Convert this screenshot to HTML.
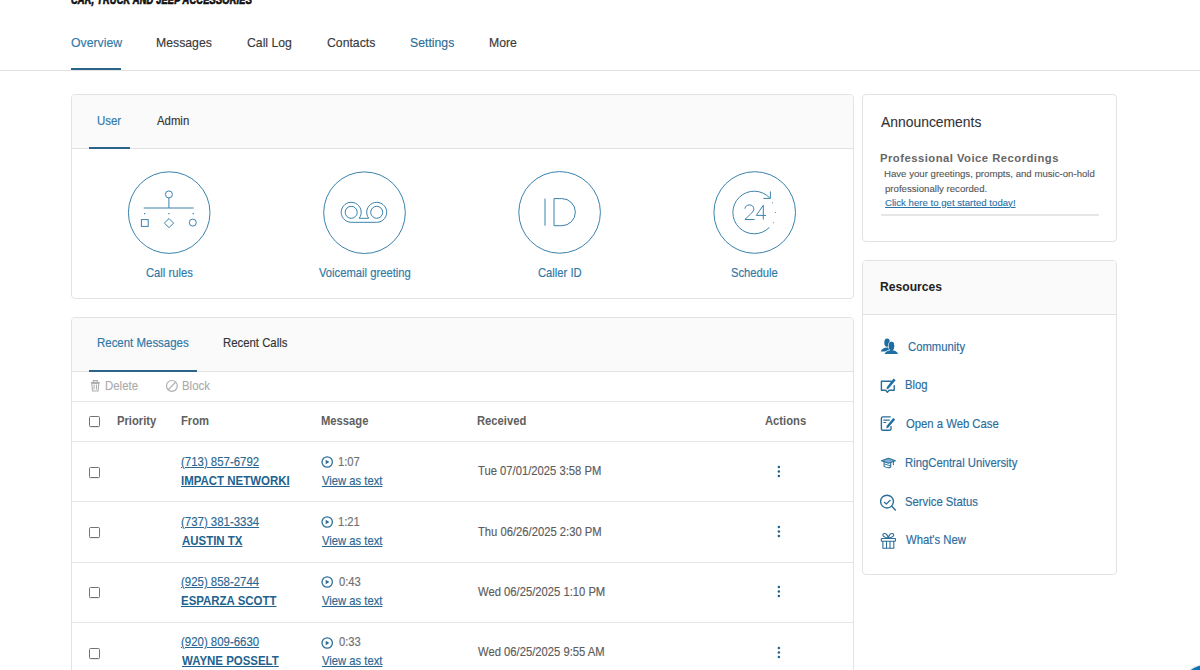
<!DOCTYPE html>
<html><head><meta charset="utf-8">
<style>
html,body{margin:0;padding:0;background:#fff;}
body{width:1200px;height:670px;overflow:hidden;position:relative;font-family:"Liberation Sans",sans-serif;color:#333;}
.a{position:absolute;white-space:nowrap;line-height:1;transform-origin:0 0;}
.card{position:absolute;border:1px solid #e3e3e3;border-radius:4px;background:#fff;box-sizing:border-box;}
.hdr{position:absolute;left:0;right:0;top:0;background:#fafafa;border-bottom:1px solid #e3e3e3;border-radius:3px 3px 0 0;box-sizing:border-box;}
.bar{position:absolute;height:2px;background:#2a6589;}
.hline{position:absolute;height:1px;background:#e6e6e6;}
.cb{position:absolute;width:9px;height:9px;border:1px solid #737373;border-radius:1.5px;background:#fff;box-shadow:0 0.6px 0.6px rgba(0,0,0,0.15);}
svg{position:absolute;overflow:visible;}
</style></head><body>

<!-- logo (cut off) -->
<div class="a" style="left:71px;top:-6.2px;font-size:12px;font-weight:700;font-style:italic;color:#111;transform:scaleX(0.775);letter-spacing:0.2px;-webkit-text-stroke:0.7px #111;">CAR, TRUCK AND JEEP ACCESSORIES</div>

<!-- header -->
<div class="hline" style="left:0;top:70px;width:1200px;background:#e3e3e3;"></div>
<div class="bar" style="left:71px;top:68px;width:50px;"></div>

<!-- card 1 -->
<div class="card" style="left:71px;top:94px;width:783px;height:205px;">
  <div class="hdr" style="height:54px;"></div>
</div>
<div class="bar" style="left:89px;top:147px;width:41px;"></div>
<svg width="1200" height="670" style="left:0;top:0;" fill="none" stroke="#3a82ad" stroke-width="1">
  <circle cx="169.2" cy="212.6" r="40.8"/>
  <circle cx="364.5" cy="212.7" r="40.8"/>
  <circle cx="559.6" cy="212.4" r="40.8"/>
  <circle cx="754.7" cy="212.5" r="40.8"/>
</svg>
<svg width="1200" height="670" style="left:0;top:0;" fill="none" stroke="#3a82ad" stroke-width="1">
  <!-- call rules -->
  <circle cx="168.9" cy="194.4" r="3.5"/>
  <path d="M168.9,197.9 L168.9,208 M143.7,208 L193.6,208"/>
  <path d="M144.6,212.9 L144.6,214.3 M168.9,212.9 L168.9,214.3 M193.2,212.9 L193.2,214.3" stroke-width="1.2"/>
  <rect x="141.4" y="219.6" width="6.8" height="6.8"/>
  <path d="M169,218.5 L173.6,223.1 L169,227.7 L164.4,223.1 Z"/>
  <circle cx="192.8" cy="222.6" r="3.5"/>
  <!-- voicemail -->
  <path d="M351.2,222.3 A10,10 0 1,1 359.2,218.3 L368.7,218.3 A10,10 0 1,1 376.7,222.3 Z"/>
  <circle cx="351.2" cy="212.3" r="6"/>
  <circle cx="376.7" cy="212.3" r="6"/>
  <!-- ID -->
  <path d="M545,198.6 L545,225.7"/>
  <path d="M554,198.6 L561.8,198.6 A13.55,13.55 0 0 1 561.8,225.7 L554,225.7 Z"/>
  <!-- schedule -->
  <path d="M769.6,197.8 A21.3,21.3 0 1,0 769.4,227.4"/>
  <path d="M763.4,198.4 L770.4,198.4 L770.4,191.4"/>
  <circle cx="772.5" cy="202.7" r="0.55" fill="#3a82ad" stroke="none"/>
  <circle cx="775.4" cy="212.5" r="0.55" fill="#3a82ad" stroke="none"/>
  <circle cx="773.4" cy="222.8" r="0.55" fill="#3a82ad" stroke="none"/>
  <path d="M744.9,208.7 C745.3,206.1 747.2,204.9 749.4,204.9 C752,204.9 753.8,206.5 753.8,208.9 C753.8,211.7 750.5,214 744.9,219.5 L754.6,219.5"/>
  <path d="M763.3,219.6 L763.3,205.3 L756.3,215.4 L766.1,215.4"/>
</svg>

<!-- card 2 -->
<div class="card" style="left:71px;top:317px;width:783px;height:400px;">
  <div class="hdr" style="height:54px;"></div>
</div>
<div class="bar" style="left:89px;top:370px;width:108px;"></div>
<div class="hline" style="left:72px;top:401px;width:781px;"></div>
<svg width="1200" height="670" style="left:0;top:0;" fill="none" stroke="#b0b0b0" stroke-width="1.1">
 <path d="M93.3,382.1 L93.3,380.6 L97.3,380.6 L97.3,382.1"/>
 <path d="M90.8,382.6 L99.8,382.6" stroke-width="1.3"/>
 <path d="M91.8,383.4 L92.5,391 L98.1,391 L98.8,383.4 Z"/>
 <path d="M94.1,384.6 L94.1,389.6 M96.5,384.6 L96.5,389.6"/>
 <circle cx="171.9" cy="385.9" r="5.4" stroke-width="1.2"/>
 <path d="M175.8,382 L168,389.8" stroke-width="1.2"/>
</svg>
<div class="cb" style="left:89px;top:416px;"></div>
<div class="hline" style="left:72px;top:441px;width:781px;"></div>
<div class="hline" style="left:72px;top:501px;width:781px;"></div>
<div class="cb" style="left:89px;top:467px;"></div>
<svg width="14" height="14" style="left:320px;top:455.0px;"><circle cx="7.2" cy="7" r="5.2" fill="none" stroke="#2c6f9c" stroke-width="1.3"/><path d="M5.7,4.8 L9.4,7 L5.7,9.2 Z" fill="#2c6f9c"/></svg>
<svg width="6" height="14" style="left:776px;top:459.9px;"><circle cx="2.85" cy="7" r="1.25" fill="#22628b"/><circle cx="2.85" cy="11.4" r="1.25" fill="#22628b"/><circle cx="2.85" cy="16" r="1.25" fill="#22628b"/></svg>
<div class="hline" style="left:72px;top:562px;width:781px;"></div>
<div class="cb" style="left:89px;top:527px;"></div>
<svg width="14" height="14" style="left:320px;top:515.2px;"><circle cx="7.2" cy="7" r="5.2" fill="none" stroke="#2c6f9c" stroke-width="1.3"/><path d="M5.7,4.8 L9.4,7 L5.7,9.2 Z" fill="#2c6f9c"/></svg>
<svg width="6" height="14" style="left:776px;top:520.1px;"><circle cx="2.85" cy="7" r="1.25" fill="#22628b"/><circle cx="2.85" cy="11.4" r="1.25" fill="#22628b"/><circle cx="2.85" cy="16" r="1.25" fill="#22628b"/></svg>
<div class="hline" style="left:72px;top:622px;width:781px;"></div>
<div class="cb" style="left:89px;top:587px;"></div>
<svg width="14" height="14" style="left:320px;top:575.4px;"><circle cx="7.2" cy="7" r="5.2" fill="none" stroke="#2c6f9c" stroke-width="1.3"/><path d="M5.7,4.8 L9.4,7 L5.7,9.2 Z" fill="#2c6f9c"/></svg>
<svg width="6" height="14" style="left:776px;top:580.3px;"><circle cx="2.85" cy="7" r="1.25" fill="#22628b"/><circle cx="2.85" cy="11.4" r="1.25" fill="#22628b"/><circle cx="2.85" cy="16" r="1.25" fill="#22628b"/></svg>
<div class="cb" style="left:89px;top:648px;"></div>
<svg width="14" height="14" style="left:320px;top:635.6px;"><circle cx="7.2" cy="7" r="5.2" fill="none" stroke="#2c6f9c" stroke-width="1.3"/><path d="M5.7,4.8 L9.4,7 L5.7,9.2 Z" fill="#2c6f9c"/></svg>
<svg width="6" height="14" style="left:776px;top:640.5px;"><circle cx="2.85" cy="7" r="1.25" fill="#22628b"/><circle cx="2.85" cy="11.4" r="1.25" fill="#22628b"/><circle cx="2.85" cy="16" r="1.25" fill="#22628b"/></svg>

<!-- announcements -->
<div class="card" style="left:862px;top:94px;width:255px;height:148px;"></div>
<div class="hline" style="left:881px;top:214px;width:218px;height:2px;background:#e6e6e6;"></div>

<!-- resources -->
<div class="card" style="left:862px;top:260px;width:255px;height:315px;">
  <div class="hdr" style="height:54px;"></div>
</div>
<svg width="1200" height="670" style="left:0;top:0;pointer-events:none;">
 <!-- community -->
 <g fill="#1d6ea3">
  <ellipse cx="887.1" cy="342.7" rx="2.8" ry="4.1"/>
  <path d="M880.8,351.6 C881.1,349.3 883.4,348.2 886.2,347.5 L888.4,347.5 L889.5,349 L889.5,351.6 Z"/>
  <g stroke="#fff" stroke-width="1.3" paint-order="stroke">
   <ellipse cx="891.5" cy="346" rx="2.7" ry="4.3"/>
   <path d="M884.7,353.9 C885.2,351.7 887.8,350.8 890.2,350.2 L892.8,350.2 C895.2,350.8 897.4,351.7 897.9,353.9 Z"/>
  </g>
  <ellipse cx="891.5" cy="346" rx="2.7" ry="4.3"/>
  <rect x="890.1" y="348.5" width="2.8" height="2.2"/>
 </g>
 <g fill="none" stroke="#2a6e98" stroke-width="1.4" stroke-linejoin="round" stroke-linecap="round">
  <!-- blog -->
  <path d="M891.2,381.2 L881.4,381.2 L881.4,390.3 L885.6,390.3 L887.4,392.3 L889.2,390.3 L894.2,390.3 L894.2,385.6"/>
  <!-- web case -->
  <path d="M890.2,416.9 L882.8,416.9 Q881.4,416.9 881.4,418.3 L881.4,428.9 Q881.4,430.3 882.8,430.3 L889.6,430.3 Q891,430.3 891,428.9 L891,426.6"/>
  <path d="M883.8,420.1 L889.4,420.1 M883.8,422.5 L885.8,422.5" stroke-width="1.1"/>
  <!-- service status -->
  <circle cx="887" cy="501.6" r="6.4"/>
  <path d="M891.7,506.3 L895.4,510"/>
  <path d="M884.3,502.3 L886.3,504 L890.2,500.3" stroke-width="1.2"/>
  <!-- gift -->
  <rect x="881.3" y="538.5" width="14.2" height="2.7" rx="0.5" stroke-width="1.1"/>
  <path d="M882.9,541.3 L882.9,548.2 L893.8,548.2 L893.8,541.3 M886.5,541.3 L886.5,548.2 M890,541.3 L890,548.2" stroke-width="1.1"/>
  <path d="M888.3,538.2 C886.4,537.6 883,536.9 882.9,535.2 C882.8,533.4 885.2,532.9 886.4,534.2 C887.4,535.3 888,536.8 888.3,538.2 C888.6,536.8 889.2,535.3 890.2,534.2 C891.4,532.9 893.8,533.4 893.7,535.2 C893.6,536.9 890.2,537.6 888.3,538.2 Z" stroke-width="1.1"/>
 </g>
 <!-- pens -->
 <g fill="#1d6ea3">
  <path d="M893.6,378.6 L895.6,380.2 L888.6,388.6 L886.6,389.4 L886.9,387.1 Z"/>
  <path d="M893.2,418.1 L895.2,419.6 L888.4,427.6 L886.3,428.4 L886.6,426.1 Z"/>
 </g>
 <!-- grad cap -->
 <g fill="none" stroke="#2a6e98" stroke-width="1.1" stroke-linejoin="round">
  <path d="M881.4,460.8 L888.4,458.3 L895.4,460.8 L888.4,463.2 Z" fill="#7fb0cf"/>
  <path d="M884.1,462.1 L884.1,466.4 Q888.2,468.8 890.7,467 L890.7,462.1"/>
  <path d="M884.4,464 L890.4,465.8" stroke-width="0.9"/>
  <path d="M893.4,461.2 L893.4,465.2" stroke-width="1"/>
 </g>
</svg>

<!-- floating button (cut off) -->
<div style="position:absolute;left:1179.5px;top:664.5px;width:53px;height:53px;border-radius:50%;background:#0b74b6;box-shadow:0 0 2px rgba(0,40,80,0.5);"></div>

<div class="a" style="left:71.20px;top:36.00px;font-size:13px;color:#2f78a6;-webkit-text-stroke:0.15px currentColor;transform:scaleX(0.942);">Overview</div>
<div class="a" style="left:155.70px;top:36.00px;font-size:13px;color:#3a3a3a;-webkit-text-stroke:0.15px currentColor;transform:scaleX(0.942);">Messages</div>
<div class="a" style="left:247.00px;top:36.00px;font-size:13px;color:#3a3a3a;-webkit-text-stroke:0.15px currentColor;transform:scaleX(0.942);">Call Log</div>
<div class="a" style="left:327.00px;top:36.00px;font-size:13px;color:#3a3a3a;-webkit-text-stroke:0.15px currentColor;transform:scaleX(0.942);">Contacts</div>
<div class="a" style="left:409.80px;top:36.00px;font-size:13px;color:#2f6f97;-webkit-text-stroke:0.15px currentColor;transform:scaleX(0.942);">Settings</div>
<div class="a" style="left:488.50px;top:36.00px;font-size:13px;color:#3a3a3a;-webkit-text-stroke:0.15px currentColor;transform:scaleX(0.942);">More</div>
<div class="a" style="left:97.25px;top:114.75px;font-size:12.2px;color:#2f78a6;-webkit-text-stroke:0.15px currentColor;transform:scaleX(0.94);">User</div>
<div class="a" style="left:157.20px;top:114.75px;font-size:12.2px;color:#333;-webkit-text-stroke:0.15px currentColor;transform:scaleX(0.932);">Admin</div>
<div class="a" style="left:146.20px;top:266.50px;font-size:12.2px;color:#2f78a6;-webkit-text-stroke:0.15px currentColor;transform:scaleX(0.922);">Call rules</div>
<div class="a" style="left:318.70px;top:266.50px;font-size:12.2px;color:#2f78a6;-webkit-text-stroke:0.15px currentColor;transform:scaleX(0.922);">Voicemail greeting</div>
<div class="a" style="left:538.40px;top:266.50px;font-size:12.2px;color:#2f78a6;-webkit-text-stroke:0.15px currentColor;transform:scaleX(0.922);">Caller ID</div>
<div class="a" style="left:730.70px;top:266.50px;font-size:12.2px;color:#2f78a6;-webkit-text-stroke:0.15px currentColor;transform:scaleX(0.922);">Schedule</div>
<div class="a" style="left:97.25px;top:336.75px;font-size:12.2px;color:#2f78a6;-webkit-text-stroke:0.15px currentColor;transform:scaleX(0.94);">Recent Messages</div>
<div class="a" style="left:223.00px;top:336.75px;font-size:12.2px;color:#333;-webkit-text-stroke:0.15px currentColor;transform:scaleX(0.932);">Recent Calls</div>
<div class="a" style="left:105.10px;top:379.70px;font-size:12.4px;color:#a9a9a9;-webkit-text-stroke:0.1px currentColor;transform:scaleX(0.922);">Delete</div>
<div class="a" style="left:181.50px;top:379.70px;font-size:12.4px;color:#a9a9a9;-webkit-text-stroke:0.1px currentColor;transform:scaleX(0.922);">Block</div>
<div class="a" style="left:117.30px;top:415.00px;font-size:12.2px;font-weight:700;color:#606060;transform:scaleX(0.922);">Priority</div>
<div class="a" style="left:180.50px;top:415.00px;font-size:12.2px;font-weight:700;color:#606060;transform:scaleX(0.922);">From</div>
<div class="a" style="left:320.50px;top:415.00px;font-size:12.2px;font-weight:700;color:#606060;transform:scaleX(0.922);">Message</div>
<div class="a" style="left:476.90px;top:415.00px;font-size:12.2px;font-weight:700;color:#606060;transform:scaleX(0.922);">Received</div>
<div class="a" style="left:764.60px;top:415.00px;font-size:12.2px;font-weight:700;color:#606060;transform:scaleX(0.922);">Actions</div>
<div class="a" style="left:881.00px;top:115.00px;font-size:14.4px;color:#333;-webkit-text-stroke:0.1px currentColor;transform:scaleX(0.965);">Announcements</div>
<div class="a" style="left:880.20px;top:153.00px;font-size:11.8px;font-weight:700;color:#666;letter-spacing:0.5px;transform:scaleX(0.955);">Professional Voice Recordings</div>
<div class="a" style="left:884.30px;top:168.90px;font-size:9.9px;color:#555;-webkit-text-stroke:0.12px currentColor;transform:scaleX(0.975);">Have your greetings, prompts, and music-on-hold</div>
<div class="a" style="left:885.30px;top:183.80px;font-size:9.9px;color:#555;-webkit-text-stroke:0.12px currentColor;transform:scaleX(0.975);">professionally recorded.</div>
<div class="a" style="left:884.90px;top:197.50px;font-size:9.9px;color:#2a72a5;text-decoration:underline;text-underline-offset:1.2px;-webkit-text-stroke:0.12px currentColor;transform:scaleX(0.975);">Click here to get started today!</div>
<div class="a" style="left:880.00px;top:281.40px;font-size:12.6px;font-weight:700;color:#222;transform:scaleX(0.963);">Resources</div>
<div class="a" style="left:908.20px;top:341.30px;font-size:12.2px;color:#2a6c9c;-webkit-text-stroke:0.15px currentColor;transform:scaleX(0.927);">Community</div>
<div class="a" style="left:905.40px;top:379.30px;font-size:12.2px;color:#2a6c9c;-webkit-text-stroke:0.15px currentColor;transform:scaleX(0.927);">Blog</div>
<div class="a" style="left:906.40px;top:418.00px;font-size:12.2px;color:#2a6c9c;-webkit-text-stroke:0.15px currentColor;transform:scaleX(0.927);">Open a Web Case</div>
<div class="a" style="left:904.90px;top:457.10px;font-size:12.2px;color:#2a6c9c;-webkit-text-stroke:0.15px currentColor;transform:scaleX(0.927);">RingCentral University</div>
<div class="a" style="left:905.00px;top:495.80px;font-size:12.2px;color:#2a6c9c;-webkit-text-stroke:0.15px currentColor;transform:scaleX(0.927);">Service Status</div>
<div class="a" style="left:906.00px;top:534.40px;font-size:12.2px;color:#2a6c9c;-webkit-text-stroke:0.15px currentColor;transform:scaleX(0.927);">What&#39;s New</div>
<div class="a" style="left:180.50px;top:455.50px;font-size:12.2px;color:#2a6792;text-decoration:underline;text-underline-offset:0.6px;-webkit-text-stroke:0.15px currentColor;transform:scaleX(0.938);">(713) 857-6792</div>
<div class="a" style="left:180.80px;top:474.50px;font-size:12.2px;font-weight:700;color:#22628e;text-decoration:underline;text-underline-offset:0.6px;transform:scaleX(0.94);">IMPACT NETWORKI</div>
<div class="a" style="left:338.00px;top:455.80px;font-size:12.2px;color:#707070;-webkit-text-stroke:0.15px currentColor;transform:scaleX(0.922);">1:07</div>
<div class="a" style="left:321.70px;top:474.60px;font-size:12.2px;color:#2a6792;text-decoration:underline;text-underline-offset:0.6px;-webkit-text-stroke:0.15px currentColor;transform:scaleX(0.922);">View as text</div>
<div class="a" style="left:477.90px;top:465.40px;font-size:12.2px;color:#5c5c5c;-webkit-text-stroke:0.15px currentColor;transform:scaleX(0.922);">Tue 07/01/2025 3:58 PM</div>
<div class="a" style="left:180.50px;top:515.70px;font-size:12.2px;color:#2a6792;text-decoration:underline;text-underline-offset:0.6px;-webkit-text-stroke:0.15px currentColor;transform:scaleX(0.938);">(737) 381-3334</div>
<div class="a" style="left:181.80px;top:534.70px;font-size:12.2px;font-weight:700;color:#22628e;text-decoration:underline;text-underline-offset:0.6px;transform:scaleX(0.94);">AUSTIN TX</div>
<div class="a" style="left:338.00px;top:516.00px;font-size:12.2px;color:#707070;-webkit-text-stroke:0.15px currentColor;transform:scaleX(0.922);">1:21</div>
<div class="a" style="left:321.70px;top:534.80px;font-size:12.2px;color:#2a6792;text-decoration:underline;text-underline-offset:0.6px;-webkit-text-stroke:0.15px currentColor;transform:scaleX(0.922);">View as text</div>
<div class="a" style="left:477.90px;top:525.60px;font-size:12.2px;color:#5c5c5c;-webkit-text-stroke:0.15px currentColor;transform:scaleX(0.922);">Thu 06/26/2025 2:30 PM</div>
<div class="a" style="left:180.50px;top:575.90px;font-size:12.2px;color:#2a6792;text-decoration:underline;text-underline-offset:0.6px;-webkit-text-stroke:0.15px currentColor;transform:scaleX(0.938);">(925) 858-2744</div>
<div class="a" style="left:180.80px;top:594.90px;font-size:12.2px;font-weight:700;color:#22628e;text-decoration:underline;text-underline-offset:0.6px;transform:scaleX(0.94);">ESPARZA SCOTT</div>
<div class="a" style="left:339.00px;top:576.20px;font-size:12.2px;color:#707070;-webkit-text-stroke:0.15px currentColor;transform:scaleX(0.922);">0:43</div>
<div class="a" style="left:321.70px;top:595.00px;font-size:12.2px;color:#2a6792;text-decoration:underline;text-underline-offset:0.6px;-webkit-text-stroke:0.15px currentColor;transform:scaleX(0.922);">View as text</div>
<div class="a" style="left:477.90px;top:585.80px;font-size:12.2px;color:#5c5c5c;-webkit-text-stroke:0.15px currentColor;transform:scaleX(0.922);">Wed 06/25/2025 1:10 PM</div>
<div class="a" style="left:180.50px;top:636.10px;font-size:12.2px;color:#2a6792;text-decoration:underline;text-underline-offset:0.6px;-webkit-text-stroke:0.15px currentColor;transform:scaleX(0.938);">(920) 809-6630</div>
<div class="a" style="left:181.80px;top:655.10px;font-size:12.2px;font-weight:700;color:#22628e;text-decoration:underline;text-underline-offset:0.6px;transform:scaleX(0.94);">WAYNE POSSELT</div>
<div class="a" style="left:339.00px;top:636.40px;font-size:12.2px;color:#707070;-webkit-text-stroke:0.15px currentColor;transform:scaleX(0.922);">0:33</div>
<div class="a" style="left:321.70px;top:655.20px;font-size:12.2px;color:#2a6792;text-decoration:underline;text-underline-offset:0.6px;-webkit-text-stroke:0.15px currentColor;transform:scaleX(0.922);">View as text</div>
<div class="a" style="left:477.90px;top:646.00px;font-size:12.2px;color:#5c5c5c;-webkit-text-stroke:0.15px currentColor;transform:scaleX(0.922);">Wed 06/25/2025 9:55 AM</div>
</body></html>
